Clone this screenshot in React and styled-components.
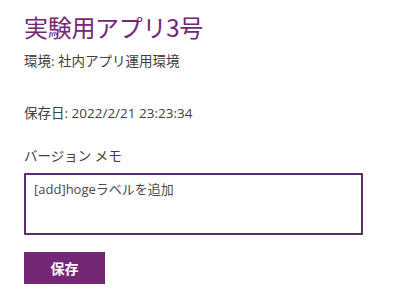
import React from "react";
import styled, { createGlobalStyle } from "styled-components";

const Global = createGlobalStyle`
  html, body { margin: 0; padding: 0; background: #ffffff; }
  body { font-family: "Open Sans", "Noto Sans CJK JP", sans-serif; }
`;

const Page = styled.div`
  width: 400px;
  height: 306px;
  box-sizing: border-box;
  padding: 11px 0 0 24px;
  display: flex;
  flex-direction: column;
  align-items: flex-start;
  background: #fff;
`;

const Title = styled.h1`
  margin: 0;
  font-family: "Noto Sans CJK JP", sans-serif;
  font-weight: 400;
  font-size: 24px;
  line-height: 32px;
  color: #742774;
  letter-spacing: -0.3px;
`;

const Text = styled.div`
  font-family: "Open Sans", "Noto Sans CJK JP", sans-serif;
  font-size: 13.5px;
  line-height: 20px;
  color: #404040;
  margin-top: ${(p) => p.$mt || 0}px;
`;

const Memo = styled.textarea`
  box-sizing: border-box;
  margin-top: 7px;
  width: 339px;
  height: 62px;
  border: 2px solid #5d2a6b;
  border-radius: 1px;
  padding: 5px 8px;
  resize: none;
  font-family: "Open Sans", "Noto Sans CJK JP", sans-serif;
  font-size: 13px;
  line-height: 18px;
  color: #4a4a4a;
  outline: none;
`;

const SaveButton = styled.button`
  margin-top: 17px;
  width: 81px;
  height: 32px;
  border: none;
  border-radius: 0;
  background: #742774;
  color: #fff;
  font-family: "Noto Sans CJK JP", sans-serif;
  font-weight: 700;
  font-size: 14px;
  cursor: pointer;
  padding: 0;
`;

export default function App() {
  return (
    <>
      <Global />
      <Page>
        <Title>実験用アプリ3号</Title>
        <Text $mt={8}>環境: 社内アプリ運用環境</Text>
        <Text $mt={32}>保存日: 2022/2/21 23:23:34</Text>
        <Text $mt={23}>バージョン メモ</Text>
        <Memo defaultValue="[add]hogeラベルを追加" />
        <SaveButton>保存</SaveButton>
      </Page>
    </>
  );
}
